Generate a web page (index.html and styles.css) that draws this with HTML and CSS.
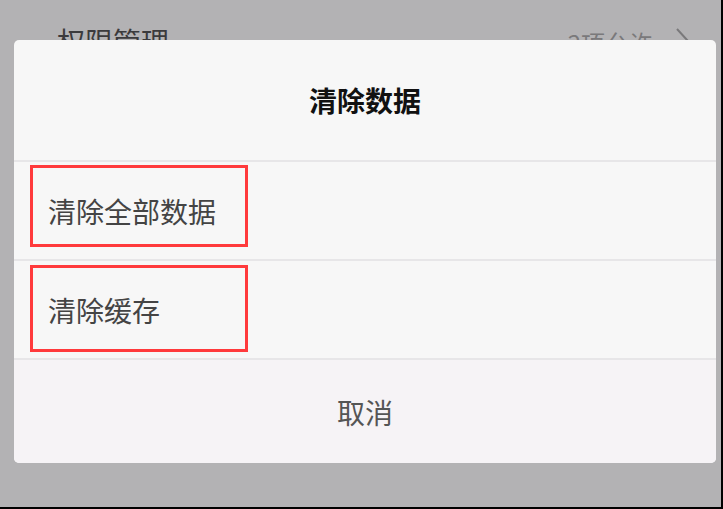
FILE: index.html
```html
<!DOCTYPE html>
<html lang="zh-CN">
<head>
<meta charset="utf-8">
<title>清除数据</title>
<link rel="stylesheet" href="styles.css">
</head>
<body>
<div class="screen">
  <div class="page">
    <div class="page-row">
      <span class="page-label">权限管理</span>
      <span class="page-value">2项允许</span>
      <svg class="chevron" width="14" height="26" viewBox="0 0 14 26"><path d="M1 1 L12 13 L1 25" fill="none" stroke="#7a797b" stroke-width="2"/></svg>
    </div>
  </div>
  <div class="dialog">
    <div class="dialog-title">清除数据</div>
    <div class="dialog-item">
      <span class="item-text">清除全部数据</span>
      <span class="mark mark-1"></span>
    </div>
    <div class="dialog-item">
      <span class="item-text">清除缓存</span>
      <span class="mark mark-2"></span>
    </div>
    <div class="dialog-cancel">取消</div>
  </div>
</div>
</body>
</html>
```
FILE: styles.css
```css
html, body {
  margin: 0;
  padding: 0;
}
body {
  width: 723px;
  height: 509px;
  overflow: hidden;
  background: #000;
  font-family: "Noto Sans CJK SC", "Noto Sans", sans-serif;
}
.screen {
  position: relative;
  width: 721px;
  height: 507px;
  background: #b3b2b4;
  overflow: hidden;
}
.page-row {
  display: flex;
  align-items: flex-start;
  padding: 27px 0 0 57px;
}
.page-label {
  font-size: 28px;
  line-height: 28px;
  color: #3b3a3c;
}
.page-value {
  margin-left: auto;
  margin-top: 4px;
  font-size: 24px;
  line-height: 24px;
  color: #7a797b;
}
.chevron {
  margin: 1px 31px 0 23px;
}
.dialog {
  position: absolute;
  left: 14px;
  top: 40px;
  width: 702px;
  height: 423px;
  border-radius: 5px;
  overflow: hidden;
  background: #f7f7f7;
  display: flex;
  flex-direction: column;
}
.dialog-title {
  height: 120px;
  display: flex;
  align-items: center;
  justify-content: center;
  font-size: 28px;
  font-weight: bold;
  color: #111;
  border-bottom: 2px solid #e7e6e8;
}
.dialog-item {
  position: relative;
  height: 97px;
  display: flex;
  align-items: center;
  padding-left: 34px;
  border-bottom: 2px solid #e7e6e8;
  font-size: 28px;
  color: #444;
}
.item-text {
  line-height: 28px;
}
.mark {
  position: absolute;
  left: 16px;
  width: 212px;
  border: 3px solid #ff3a3c;
}
.mark-1 {
  top: 3px;
  height: 76px;
}
.mark-2 {
  top: 4px;
  height: 81px;
}
.dialog-cancel {
  flex: 1;
  display: flex;
  align-items: center;
  justify-content: center;
  background: #f6f3f6;
  font-size: 28px;
  color: #555;
}
```
